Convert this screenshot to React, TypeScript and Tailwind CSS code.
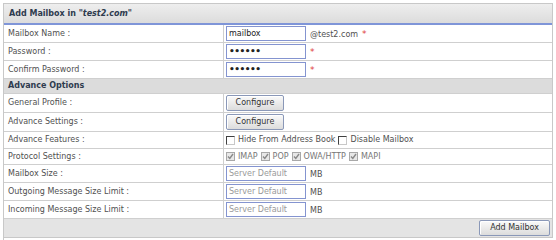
import React from "react";

const font = { fontFamily: '"DejaVu Sans", Verdana, sans-serif' };

function Row({ label, children, h = "h-[18px]" }: { label: string; children: React.ReactNode; h?: string }) {
  return (
    <div className={`flex ${h} border-b border-[#cfcfcf]`}>
      <div className="w-[220px] shrink-0 border-r border-[#cfcfcf] pl-[4px] flex items-center text-[8px] text-[#505050]">
        {label}
      </div>
      <div className="flex-1 pl-[2px] flex items-center text-[8px] text-[#505050]">{children}</div>
    </div>
  );
}

function TextBox({ value, pw, placeholder }: { value?: string; pw?: boolean; placeholder?: boolean }) {
  return (
    <div
      className={`w-[80px] h-[15px] border border-[#8494d0] bg-white flex items-center pl-[2px] text-[8px] ${
        placeholder ? "text-[#9a9a9a]" : "text-[#222]"
      }`}
    >
      {pw ? <span className="text-[9px] font-bold tracking-[-0.5px] leading-none">••••••</span> : value}
    </div>
  );
}

function Star() {
  return <span className="text-[#e04040] text-[9px] ml-[4px] mt-[3px]">*</span>;
}

function Btn({ label, w }: { label: string; w: string }) {
  return (
    <div
      className={`${w} h-[16px] rounded-[2px] border border-[#8a98b8] bg-gradient-to-b from-[#fafafa] to-[#dcdcdc] flex items-center justify-center text-[8px] text-[#333] shadow-[inset_1px_1px_0_#fff]`}
    >
      {label}
    </div>
  );
}

function Check({ checked, disabled }: { checked?: boolean; disabled?: boolean }) {
  return (
    <span
      className={`inline-flex w-[9px] h-[9px] border items-center justify-center mr-[3px] ${
        disabled
          ? "border-[#a8a8a8] bg-[#e8e8e8]"
          : "border-t-[#404040] border-l-[#404040] border-r-[#c8c8c8] border-b-[#c8c8c8] bg-white"
      }`}
    >
      {checked && (
        <svg width="7" height="7" viewBox="0 0 7 7">
          <path d="M1 3.5 L2.8 5.5 L6 1" stroke="#8a8a8a" strokeWidth="1.4" fill="none" />
        </svg>
      )}
    </span>
  );
}

export default function App() {
  return (
    <div className="w-[556px] h-[240px] bg-white overflow-hidden" style={font}>
      <div className="ml-[3px] mt-[3px] w-[550px] border-l border-[#c8c8c8] h-[237px]">
        <div className="border border-[#c8c8c8] border-l-0">
          <div className="h-[21px] bg-gradient-to-b from-[#eeeeee] to-[#dcdcdc] flex items-center pl-[5px] border-b-2 border-[#7f95d8]">
            <span className="text-[8px] font-bold text-[#2e3b4e]">
              Add Mailbox in "<i>test2.com</i>"
            </span>
          </div>
          <Row label="Mailbox Name :">
            <TextBox value="mailbox" />
            <span className="ml-[4px] mt-[3px]">@test2.com</span>
            <Star />
          </Row>
          <Row label="Password :">
            <TextBox pw />
            <Star />
          </Row>
          <Row label="Confirm Password :">
            <TextBox pw />
            <Star />
          </Row>
          <div className="h-[15px] bg-[#dcdcdc] border-b border-[#cfcfcf] flex items-center pl-[4px] text-[8px] font-bold text-[#2e3b4e]">
            Advance Options
          </div>
          <Row label="General Profile :" h="h-[19px]">
            <Btn label="Configure" w="w-[58px]" />
          </Row>
          <Row label="Advance Settings :" h="h-[19px]">
            <Btn label="Configure" w="w-[58px]" />
          </Row>
          <Row label="Advance Features :" h="h-[17px]">
            <Check />
            <span>Hide From Address Book</span>
            <span className="ml-[3px]" />
            <Check />
            <span>Disable Mailbox</span>
          </Row>
          <Row label="Protocol Settings :" h="h-[16px]">
            <Check checked disabled />
            <span className="text-[#777]">IMAP</span>
            <span className="ml-[3px]" />
            <Check checked disabled />
            <span className="text-[#777]">POP</span>
            <span className="ml-[3px]" />
            <Check checked disabled />
            <span className="text-[#777]">OWA/HTTP</span>
            <span className="ml-[3px]" />
            <Check checked disabled />
            <span className="text-[#777]">MAPI</span>
          </Row>
          <Row label="Mailbox Size :">
            <TextBox value="Server Default" placeholder />
            <span className="ml-[4px] mt-[3px]">MB</span>
          </Row>
          <Row label="Outgoing Message Size Limit :">
            <TextBox value="Server Default" placeholder />
            <span className="ml-[4px] mt-[3px]">MB</span>
          </Row>
          <Row label="Incoming Message Size Limit :">
            <TextBox value="Server Default" placeholder />
            <span className="ml-[4px] mt-[3px]">MB</span>
          </Row>
          <div className="h-[18px] bg-[#e4e4e4] flex items-center justify-end pr-[2px]">
            <Btn label="Add Mailbox" w="w-[71px]" />
          </div>
        </div>
      </div>
    </div>
  );
}
